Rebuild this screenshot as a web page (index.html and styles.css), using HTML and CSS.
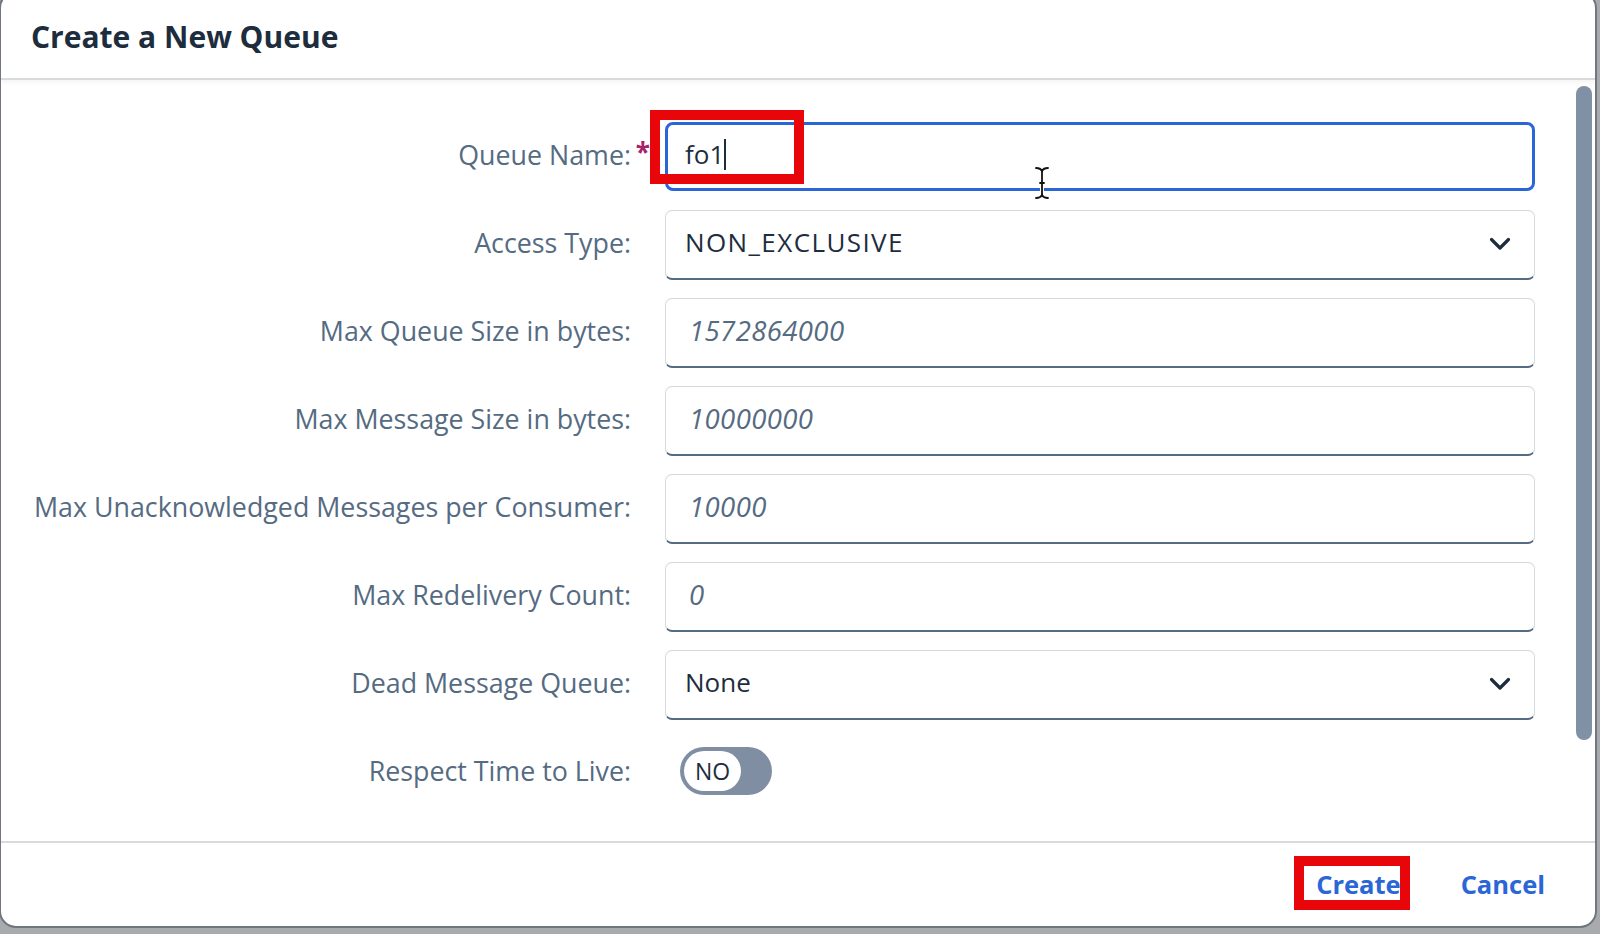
FILE: index.html
```html
<!DOCTYPE html>
<html lang="en">
<head>
<meta charset="utf-8">
<title>Create a New Queue</title>
<link rel="stylesheet" href="styles.css">
</head>
<body>
<div class="dialog">
  <header class="dlg-header">
    <h1 class="dlg-title">Create a New Queue</h1>
  </header>
  <div class="dlg-body">
    <div class="form">
      <div class="label">Queue Name:<span class="req">*</span></div>
      <div class="field field--focus"><span class="value">fo1</span><span class="caret"></span></div>

      <div class="label">Access Type:<span class="req"></span></div>
      <div class="field field--select"><span class="value value--wide">NON_EXCLUSIVE</span>
        <svg class="chev" width="22" height="14" viewBox="0 0 22 14"><path d="M2.5 2.5 L11 11 L19.5 2.5" fill="none" stroke="#1d2d3e" stroke-width="3.2" stroke-linecap="round" stroke-linejoin="round"/></svg>
      </div>

      <div class="label">Max Queue Size in bytes:<span class="req"></span></div>
      <div class="field"><span class="placeholder">1572864000</span></div>

      <div class="label">Max Message Size in bytes:<span class="req"></span></div>
      <div class="field"><span class="placeholder">10000000</span></div>

      <div class="label">Max Unacknowledged Messages per Consumer:<span class="req"></span></div>
      <div class="field"><span class="placeholder">10000</span></div>

      <div class="label">Max Redelivery Count:<span class="req"></span></div>
      <div class="field"><span class="placeholder">0</span></div>

      <div class="label">Dead Message Queue:<span class="req"></span></div>
      <div class="field field--select"><span class="value">None</span>
        <svg class="chev" width="22" height="14" viewBox="0 0 22 14"><path d="M2.5 2.5 L11 11 L19.5 2.5" fill="none" stroke="#1d2d3e" stroke-width="3.2" stroke-linecap="round" stroke-linejoin="round"/></svg>
      </div>

      <div class="label">Respect Time to Live:<span class="req"></span></div>
      <div class="toggle-cell">
        <div class="toggle"><span class="knob">NO</span></div>
      </div>
    </div>
    <div class="scroll-track"><div class="scroll-thumb"></div></div>
  </div>
  <footer class="dlg-footer">
    <button class="btn">Create</button>
    <button class="btn">Cancel</button>
  </footer>
</div>

<div class="annot annot--name"></div>
<div class="annot annot--create"></div>

<svg class="ibeam" width="16" height="34" viewBox="0 0 16 34">
  <g fill="none" stroke="#ffffff" stroke-width="4" stroke-linecap="round">
    <path d="M2 2 C5 2 7 3 8 5 C9 3 11 2 14 2"/>
    <path d="M8 5 V29"/>
    <path d="M2 32 C5 32 7 31 8 29 C9 31 11 32 14 32"/>
  </g>
  <g fill="none" stroke="#111111" stroke-width="1.8" stroke-linecap="round">
    <path d="M2 2 C5 2 7 3 8 5 C9 3 11 2 14 2"/>
    <path d="M8 5 V29"/>
    <path d="M2 32 C5 32 7 31 8 29 C9 31 11 32 14 32"/>
    <path d="M6 17 H10"/>
  </g>
</svg>
</body>
</html>
```

FILE: styles.css
```css
html, body {
  margin: 0;
  padding: 0;
}

body {
  width: 1600px;
  height: 934px;
  overflow: hidden;
  background: #a8aaad;
  font-family: "Open Sans", "Noto Sans", Arial, sans-serif;
}

.dialog {
  box-sizing: border-box;
  width: 1598px;
  height: 937px;
  margin-top: -9px;
  margin-left: -1px;
  background: #ffffff;
  border: 2px solid #6f7680;
  border-radius: 17px;
  display: flex;
  flex-direction: column;
  overflow: hidden;
}

.dlg-header {
  box-sizing: border-box;
  height: 87px;
  flex: none;
  display: flex;
  align-items: center;
  padding: 1px 0 0 30px;
  border-bottom: 2px solid #d9dadc;
  box-shadow: 0 2px 5px rgba(0, 0, 0, 0.05);
  position: relative;
  z-index: 1;
}

.dlg-title {
  margin: 0;
  font-size: 30px;
  font-weight: 700;
  color: #1d2d3e;
  letter-spacing: 0;
}

.dlg-body {
  box-sizing: border-box;
  height: 761px;
  flex: none;
  display: flex;
}

.form {
  flex: 1;
  display: grid;
  grid-template-columns: 646px 870px;
  grid-auto-rows: 70px;
  column-gap: 18px;
  row-gap: 18px;
  padding-top: 42px;
  align-content: start;
}

.label {
  box-sizing: border-box;
  display: flex;
  justify-content: flex-end;
  align-items: center;
  padding-bottom: 5px;
  font-size: 26.8px;
  color: #556b82;
  white-space: nowrap;
}

.req {
  display: inline-block;
  width: 16px;
  text-align: right;
  font-size: 26px;
  font-weight: 700;
  color: #a8226a;
  position: relative;
  top: -3px;
  left: 3px;
}

.field {
  box-sizing: border-box;
  height: 70px;
  display: flex;
  align-items: center;
  padding: 0 23px 5px 19px;
  border: 1px solid #d5dadd;
  border-bottom: 2px solid #556b82;
  border-radius: 7px;
  background: #ffffff;
  font-size: 26px;
}

.field--focus {
  height: 69px;
  border: 3px solid #2b66d6;
  border-radius: 8px;
  padding-left: 17px;
}

.field--select {
  justify-content: space-between;
}

.value {
  color: #1d2d3e;
}

.value--wide {
  letter-spacing: 1.4px;
}

.placeholder {
  margin-left: 4px;
  color: #556b82;
  font-style: italic;
  font-size: 27.5px;
  letter-spacing: 0.4px;
}

.caret {
  display: inline-block;
  width: 2px;
  height: 31px;
  margin-left: 0;
  background: #1d2d3e;
}

.chev {
  display: block;
  flex: none;
  position: relative;
  top: 2px;
}

.toggle-cell {
  display: flex;
  align-items: center;
  padding-left: 15px;
  position: relative;
  top: -2px;
}

.toggle {
  box-sizing: border-box;
  width: 92px;
  height: 48px;
  padding: 4px;
  border-radius: 24px;
  background: #7f8ea3;
  display: flex;
  align-items: center;
}

.knob {
  box-sizing: border-box;
  width: 57px;
  height: 40px;
  border-radius: 20px;
  background: #ffffff;
  display: flex;
  align-items: center;
  justify-content: center;
  font-size: 23px;
  color: #1d2d3e;
}

.scroll-track {
  flex: none;
  width: 16px;
  margin-right: 3px;
  padding-top: 6px;
}

.scroll-thumb {
  width: 16px;
  height: 654px;
  border-radius: 8px;
  background: #8090a5;
}

.dlg-footer {
  box-sizing: border-box;
  height: 85px;
  flex: none;
  display: flex;
  justify-content: flex-end;
  align-items: center;
  gap: 28px;
  padding-right: 34px;
  border-top: 2px solid #d9dadc;
}

.btn {
  border: 0;
  background: transparent;
  padding: 0 16px 2px;
  font-family: "Open Sans", "Noto Sans", Arial, sans-serif;
  font-size: 25.5px;
  font-weight: 700;
  color: #2b66d6;
  cursor: pointer;
}

.annot {
  position: absolute;
  box-sizing: border-box;
  border: 10px solid #e8060a;
}

.annot--name {
  left: 650px;
  top: 110px;
  width: 154px;
  height: 74px;
}

.annot--create {
  left: 1294px;
  top: 856px;
  width: 116px;
  height: 54px;
}

.ibeam {
  position: absolute;
  left: 1034px;
  top: 166px;
}
```
